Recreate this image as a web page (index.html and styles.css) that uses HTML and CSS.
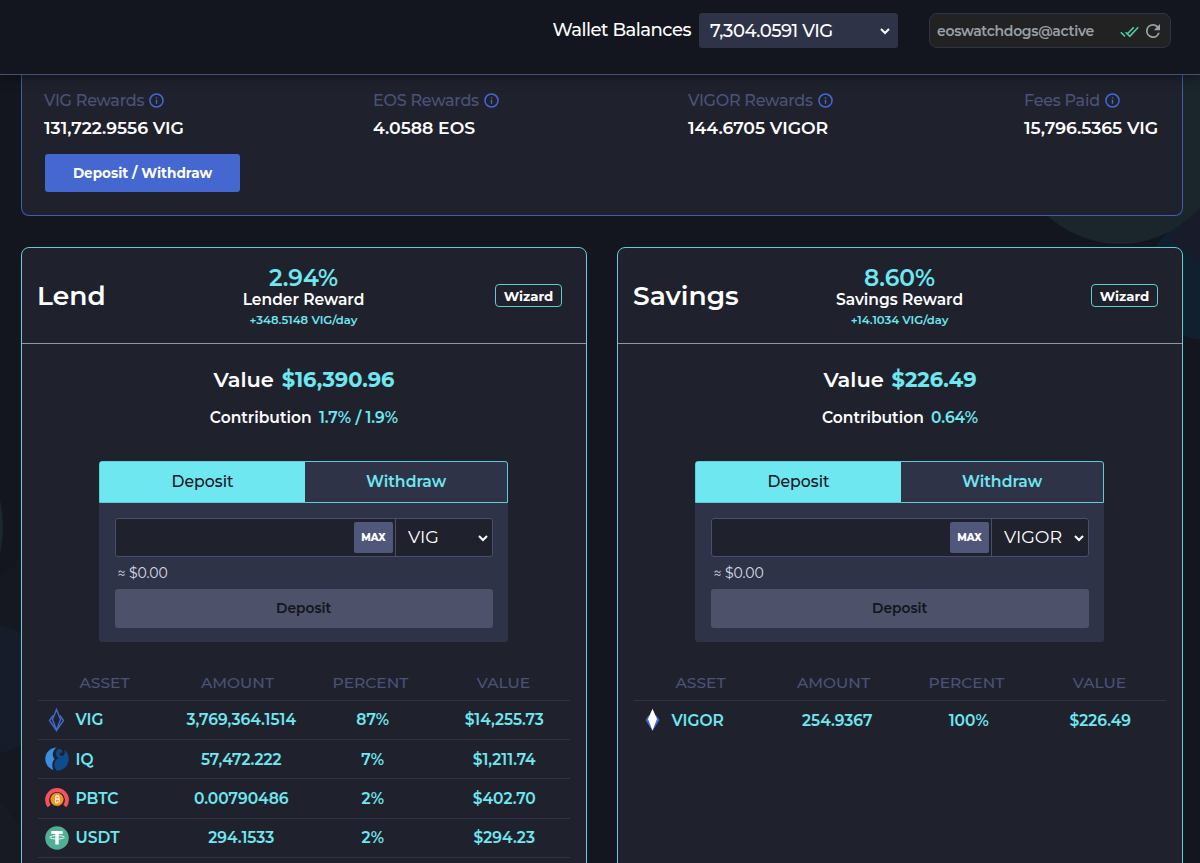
FILE: index.html
```html
<!DOCTYPE html>
<html lang="en">
  <head>
    <meta charset="utf-8">
    <title>Wallet Dashboard</title>
    <link rel="stylesheet" href="styles.css">
  </head>

  <body>
    <!-- Background shapes -->
    <svg class="backdrop" width="1200" height="863" viewBox="0 0 1200 863">
      <circle cx="1205" cy="280" r="60" fill="#10202f" />
      <path d="M1170 238L1200 208V262Z" fill="#181b29" />
      <circle cx="1120" cy="137" r="107" fill="#1a252c" />
      <path d="M0 577L20 560V825L0 800Z" fill="#161821" />
      <path d="M0 800L20 825V863H0Z" fill="#171a23" />
      <circle cx="-120" cy="527" r="123" fill="#1a272d" />
      <circle cx="-14" cy="689" r="65.5" fill="#161c2a" />
    </svg>

    <!-- Icons used more than once -->
    <svg class="sprite">
      <symbol id="info" viewBox="0 0 16 16">
        <circle cx="8" cy="8" r="7" fill="none" stroke="#4468cf" stroke-width="1.6" />
        <path d="M8 7.2V11.5M8 4.4V5.8" stroke="#4468cf" stroke-width="1.5" />
      </symbol>
      <symbol id="chevron" viewBox="0 0 10 8">
        <path d="M1 2L5 6L9 2" fill="none" stroke="#fff" stroke-width="2" />
      </symbol>
    </svg>

    <header class="topbar">
      <label class="balances-label" for="balances">Wallet Balances</label>
      <div class="select balances">
        <select id="balances"><option>7,304.0591 VIG</option></select>
        <svg class="chevron"><use href="#chevron" /></svg>
      </div>
      <div class="account">
        <span class="account-name">eoswatchdogs@active</span>
        <svg class="icon-check" width="19" height="12" viewBox="0 0 19 12" fill="none" stroke="#45d0a5" stroke-width="1.6">
          <path d="M.8 6.2L5 10.4M7.400 7.800L13.800 1.200M5.600 6.200L9.800 10.400L18.200 1.200" />
        </svg>
        <svg class="icon-refresh" width="14" height="14" viewBox="4 4 16 16" fill="#98a0a8">
          <path d="M17.65 6.35A7.96 7.96 0 0 0 12 4a8 8 0 1 0 7.73 10h-2.08A6 6 0 1 1 12 6c1.66 0 3.14.69 4.22 1.78L13 11h7V4z" />
        </svg>
      </div>
    </header>

    <main class="container">
      <section class="rewards">
        <div class="rewards-list">
          <div>
            <p class="reward-label">VIG Rewards <svg class="info"><use href="#info" /></svg></p>
            <p class="reward-value">131,722.9556 VIG</p>
          </div>
          <div>
            <p class="reward-label">EOS Rewards <svg class="info"><use href="#info" /></svg></p>
            <p class="reward-value">4.0588 EOS</p>
          </div>
          <div>
            <p class="reward-label">VIGOR Rewards <svg class="info"><use href="#info" /></svg></p>
            <p class="reward-value">144.6705 VIGOR</p>
          </div>
          <div>
            <p class="reward-label">Fees Paid <svg class="info"><use href="#info" /></svg></p>
            <p class="reward-value">15,796.5365 VIG</p>
          </div>
        </div>
        <button class="btn-primary">Deposit / Withdraw</button>
      </section>

      <div class="cards">
        <!-- Lend -->
        <section class="card">
          <div class="card-header">
            <h2>Lend</h2>
            <div class="rate">
              <p class="rate-percent">2.94%</p>
              <p class="rate-name">Lender Reward</p>
              <p class="rate-day">+348.5148 VIG/day</p>
            </div>
            <button class="btn-wizard">Wizard</button>
          </div>
          <div class="card-body">
            <p class="total">Value <b>$16,390.96</b></p>
            <p class="contribution">Contribution <b>1.7% / 1.9%</b></p>
            <div class="form">
              <div class="tabs">
                <button class="tab active">Deposit</button>
                <button class="tab">Withdraw</button>
              </div>
              <div class="form-body">
                <div class="amount">
                  <input type="text">
                  <button class="btn-max">MAX</button>
                  <div class="select token">
                    <select><option>VIG</option></select>
                    <svg class="chevron"><use href="#chevron" /></svg>
                  </div>
                </div>
                <p class="approx">≈ $0.00</p>
                <button class="btn-submit">Deposit</button>
              </div>
            </div>
            <div class="table">
              <div class="row head"><span>ASSET</span><span>AMOUNT</span><span>PERCENT</span><span>VALUE</span></div>
              <div class="row">
                <span class="asset">
                  <svg width="24" height="24" viewBox="0 0 24 24" fill="none" stroke="#4468cf" stroke-width="1.4">
                    <path d="M11.500 1.500L15.500 11.500L11.500 22L7.500 11.500Z" />
                    <path d="M8.200 7.500L4.500 12.500L11.500 22.500L18.500 12.500L14.800 7.500" />
                  </svg>
                  VIG
                </span>
                <span>3,769,364.1514</span><span>87%</span><span>$14,255.73</span>
              </div>
              <div class="row">
                <span class="asset">
                  <svg width="24" height="24" viewBox="0 0 24 24">
                    <path d="M11.500.5C3.800 1 .3 6.500.3 12C.3 17.500 4 21.500 8.200 23C6.800 18.500 6.800 15.500 9.500 12C6.500 8.500 7.500 3.500 11.500.5Z" fill="#3b8fe0" />
                    <path d="M19 2.300C22 4.500 23.700 8 23.700 12C23.700 18.500 18.500 23.500 12 23.700C9 21 8.500 16 11 13C12 12 13.500 12 14 11C10.500 9.500 10.500 5 12.500 2.500C14 1.300 15 2.300 17 3C17.500 5.500 16.500 6.500 14.500 5.500C14.200 7.500 15.200 9 17 9C20 8.500 20.500 5 19 2.300Z" fill="#0d4d8d" />
                  </svg>
                  IQ
                </span>
                <span>57,472.222</span><span>7%</span><span>$1,211.74</span>
              </div>
              <div class="row">
                <span class="asset">
                  <svg width="24" height="24" viewBox="0 0 24 24">
                    <path d="M4.200 19A9.900 9.900 0 1 1 19.800 19" fill="none" stroke="#f5525d" stroke-width="4" />
                    <circle cx="12" cy="12.300" r="6.600" fill="#f7931a" />
                    <path d="M10.300 9.300H12.700C14.700 9.300 14.700 12.100 12.700 12.100H10.300M12.700 12.100C15.200 12.100 15 15.300 12.700 15.300H9.800M10.800 9.300L10.300 15.300M11.600 8V9.300M13.200 8V9.300M11 15.300V16.600M12.600 15.300V16.600" fill="none" stroke="#fff" stroke-width="1.100" />
                  </svg>
                  PBTC
                </span>
                <span>0.00790486</span><span>2%</span><span>$402.70</span>
              </div>
              <div class="row">
                <span class="asset">
                  <svg width="24" height="24" viewBox="0 0 24 24">
                    <circle cx="12" cy="12" r="11.800" fill="#50af95" />
                    <path d="M6.300 5H17.700V8H13.700V18.500H10.300V8H6.300Z" fill="#fff" />
                    <ellipse cx="12" cy="11.300" rx="7.300" ry="1.700" fill="none" stroke="#fff" stroke-width=".9" />
                  </svg>
                  USDT
                </span>
                <span>294.1533</span><span>2%</span><span>$294.23</span>
              </div>
            </div>
          </div>
        </section>

        <!-- Savings -->
        <section class="card">
          <div class="card-header">
            <h2>Savings</h2>
            <div class="rate">
              <p class="rate-percent">8.60%</p>
              <p class="rate-name">Savings Reward</p>
              <p class="rate-day">+14.1034 VIG/day</p>
            </div>
            <button class="btn-wizard">Wizard</button>
          </div>
          <div class="card-body">
            <p class="total">Value <b>$226.49</b></p>
            <p class="contribution">Contribution <b>0.64%</b></p>
            <div class="form">
              <div class="tabs">
                <button class="tab active">Deposit</button>
                <button class="tab">Withdraw</button>
              </div>
              <div class="form-body">
                <div class="amount">
                  <input type="text">
                  <button class="btn-max">MAX</button>
                  <div class="select token">
                    <select><option>VIGOR</option></select>
                    <svg class="chevron"><use href="#chevron" /></svg>
                  </div>
                </div>
                <p class="approx">≈ $0.00</p>
                <button class="btn-submit">Deposit</button>
              </div>
            </div>
            <div class="table">
              <div class="row head"><span>ASSET</span><span>AMOUNT</span><span>PERCENT</span><span>VALUE</span></div>
              <div class="row last">
                <span class="asset">
                  <svg width="24" height="24" viewBox="0 0 24 24">
                    <path d="M7.500 7.500L4.500 12L11.500 23L18.500 12L15.500 7.500Z" fill="#4468cf" />
                    <path d="M11.500 .8L16 11L11.500 22.500L7 11Z" fill="#fff" />
                  </svg>
                  VIGOR
                </span>
                <span>254.9367</span><span>100%</span><span>$226.49</span>
              </div>
            </div>
          </div>
        </section>
      </div>
    </main>
  </body>
</html>
```

FILE: styles.css
```css
* {
  margin: 0;
  padding: 0;
  box-sizing: border-box;
}

body {
  height: 863px;
  overflow: hidden;
  background: #13161e;
  color: #fff;
  font-family: Montserrat, Inter, "Open Sans", sans-serif;
  font-size: 16px;
}

button,
input,
select {
  font: inherit;
  color: inherit;
  border: none;
  background: none;
  outline: none;
}

.backdrop {
  position: absolute;
  top: 0;
  left: 0;
  z-index: -1;
}

.sprite {
  display: none;
}

/* Top bar */
.topbar {
  position: relative;
  display: flex;
  justify-content: flex-end;
  align-items: flex-start;
  height: 75px;
  padding: 13px 29px 0 0;
  background: #13161e;
  border-bottom: 1px solid #475077;
  box-shadow: 0 2px 12px rgba(0, 0, 0, 0.45);
}

.balances-label {
  margin-right: 8px;
  font-size: 18px;
  font-weight: 500;
  line-height: 35px;
  letter-spacing: -0.5px;
}

.select {
  position: relative;
}

.select select {
  width: 100%;
  height: 100%;
  appearance: none;
}

.chevron {
  position: absolute;
  top: 50%;
  right: 8px;
  width: 10px;
  height: 8px;
  margin-top: -4px;
}

.balances {
  width: 199px;
  height: 35px;
  margin-right: 31px;
  background: #2f3347;
  border-radius: 3px;
}

.balances select {
  padding-left: 11px;
  font-size: 18px;
  font-weight: 500;
  letter-spacing: -0.5px;
}

.account {
  display: flex;
  align-items: center;
  width: 242px;
  height: 35px;
  padding: 0 10px 0 7px;
  background: #222;
  border: 1px solid #2f3347;
  border-radius: 8px;
}

.account-name {
  flex: 1;
  color: #98a0a8;
  font-size: 14px;
  font-weight: 600;
  letter-spacing: -0.3px;
}

.icon-check {
  margin: 2px 7px 0 0;
}

/* Rewards */
.container {
  padding: 0 17px 0 21px;
}

.rewards {
  width: 1162px;
  height: 141px;
  padding: 12px 22px 0;
  background: #1f222d;
  border: 1px solid #3f5db5;
  border-top: none;
  border-radius: 0 0 8px 8px;
}

.rewards-list {
  display: grid;
  grid-template-columns: 329px 315px 336px auto;
}

.reward-label {
  display: flex;
  align-items: center;
  gap: 5px;
  height: 27px;
  color: #4b5278;
  font-weight: 500;
  letter-spacing: -0.25px;
}

.info {
  width: 15px;
  height: 15px;
}

.reward-value {
  font-size: 17.3px;
  font-weight: 600;
  line-height: 27px;
  white-space: nowrap;
}

.btn-primary {
  display: block;
  width: 195px;
  height: 38px;
  margin: 13px 0 0 1px;
  background: #4468cf;
  border-radius: 3px;
  font-size: 13.6px;
  font-weight: 700;
}

/* Cards */
.cards {
  display: flex;
  gap: 30px;
  margin-top: 31px;
}

.card {
  width: 566px;
  height: 640px;
  background: #1f222d;
  border: 1px solid #5fcbd4;
  border-radius: 8px;
}

.card-header {
  display: grid;
  grid-template-columns: 1fr 200px 1fr;
  align-items: center;
  height: 96px;
  padding: 0 24px 0 15px;
  border-bottom: 1px solid #8d979f;
}

.card h2 {
  font-size: 26.5px;
  font-weight: 600;
}

.rate {
  padding-top: 5px;
  margin-left: 8px;
  text-align: center;
  font-weight: 600;
}

.rate-percent {
  color: #6ee7f0;
  font-size: 23.3px;
  line-height: 25px;
}

.rate-name {
  font-size: 15.5px;
  line-height: 20px;
}

.rate-day {
  color: #6ee7f0;
  font-size: 11.6px;
  line-height: 21px;
}

.btn-wizard {
  justify-self: end;
  width: 67px;
  height: 23px;
  border: 1px solid #5fcbd4;
  border-radius: 4px;
  font-size: 13.3px;
  font-weight: 700;
}

.card-body {
  text-align: center;
}

.card-body b {
  color: #6ee7f0;
}

.total {
  padding-top: 22px;
  font-size: 21px;
  font-weight: 600;
  line-height: 28px;
}

.total b {
  margin-left: 2px;
  font-weight: 700;
}

.contribution {
  margin-top: 12px;
  font-size: 15.5px;
  font-weight: 600;
  line-height: 24px;
}

.contribution b {
  margin-left: 3px;
  font-weight: 600;
}

/* Deposit form */
.form {
  width: 409px;
  height: 181px;
  margin: 31px 0 0 77px;
  background: #2f3347;
  border-radius: 3px;
}

.tabs {
  display: flex;
  height: 42px;
  border: 1px solid #5fcbd4;
  border-radius: 3px 3px 0 0;
}

.tab {
  flex: 1;
  padding-bottom: 1px;
  color: #6ee7f0;
  font-size: 15.7px;
  font-weight: 600;
}

.tab.active {
  flex: 0 0 205px;
  background: #6ee7f0;
  color: #13151d;
  font-weight: 500;
}

.form-body {
  padding: 15px 15px 0 15.5px;
}

.amount {
  display: flex;
  align-items: center;
  height: 39px;
  background: #1f222d;
  border: 1px solid #474e70;
  border-radius: 3px;
}

.amount input {
  flex: 1;
  min-width: 0;
  height: 100%;
}

.btn-max {
  width: 39px;
  height: 31px;
  margin-right: 2px;
  background: #4f577a;
  border-radius: 2px;
  font-size: 10px;
  font-weight: 800;
}

.token {
  width: 97px;
  height: 100%;
  border-left: 1px solid #474e70;
}

.token .chevron {
  right: 4px;
}

.token select {
  padding: 0 0 2px 12px;
  font-size: 17.5px;
}

.approx {
  padding-left: 3px;
  color: #dcdee6;
  font-size: 14px;
  line-height: 32px;
  letter-spacing: -0.1px;
  text-align: left;
}

.btn-submit {
  width: 378px;
  height: 39px;
  padding-bottom: 2px;
  background: #4d5169;
  border-radius: 3px;
  color: #13151d;
  font-size: 13.8px;
  font-weight: 600;
}

/* Assets table */
.table {
  width: 532px;
  margin: 23px 0 0 16px;
}

.row {
  display: grid;
  grid-template-columns: 137.5px 131.5px 131.5px 131.5px;
  align-items: center;
  height: 39.4px;
  border-bottom: 1px solid #2f3347;
  color: #6ee7f0;
  font-size: 15.5px;
  font-weight: 600;
}

.row.head {
  grid-template-columns: repeat(4, 133px);
  height: 35.6px;
  color: #4b5278;
  font-weight: 500;
}

.row.last {
  border-bottom: none;
}

.asset {
  display: flex;
  align-items: center;
  gap: 7px;
  padding-left: 6.5px;
}
```
